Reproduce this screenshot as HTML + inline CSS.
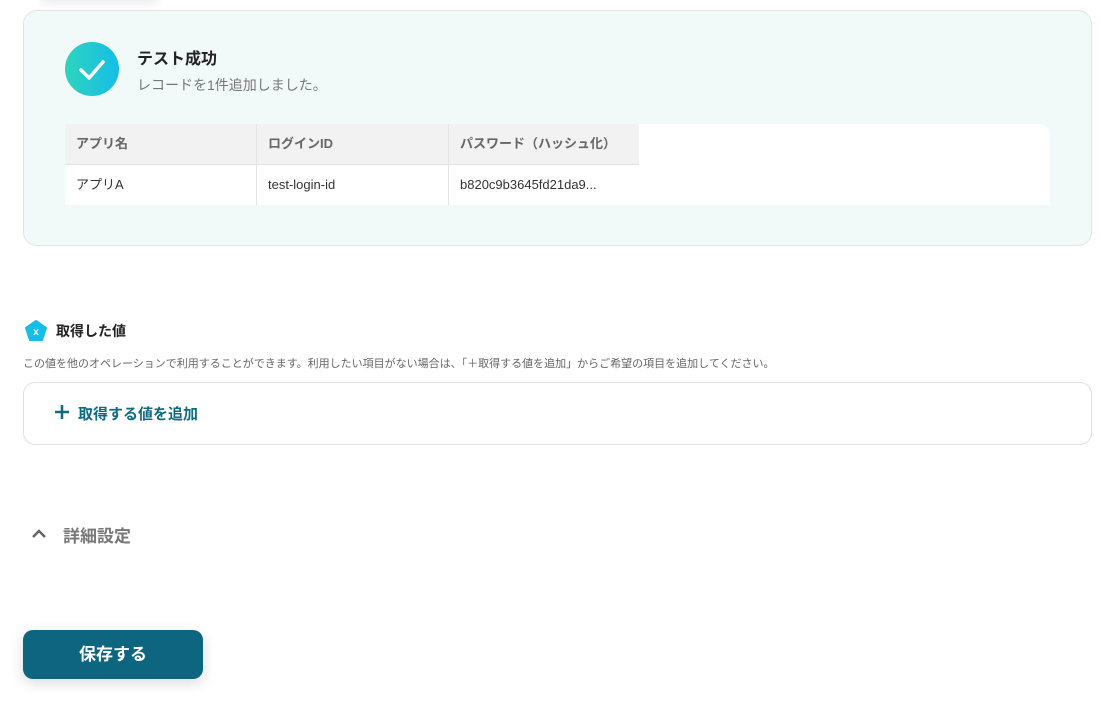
<!DOCTYPE html>
<html><head><meta charset="utf-8"><style>
*{margin:0;padding:0;box-sizing:border-box}
body{width:1115px;height:713px;background:#fff;font-family:"Liberation Sans","Noto Sans CJK JP",sans-serif;position:relative;overflow:hidden;color:#333}
.abs{position:absolute}
.card{left:23px;top:10px;width:1069px;height:236px;background:#f2f9f9;border:1px solid #dde6e6;border-radius:14px}
.tbl{left:65px;top:124px;width:985px;height:81px;background:#fff;border-radius:0 12px 0 0;overflow:hidden}
.cell{position:absolute;font-size:13px;padding-left:11px;line-height:40px;color:#333}
.hd{background:#f2f2f2;color:#666;font-weight:bold;height:41px;border-bottom:1px solid #e3e3e3}
</style></head><body>
<div class="abs" style="left:40px;top:-20px;width:120px;height:20px;box-shadow:0 4px 10px rgba(0,0,0,.08);border-radius:10px"></div>
<div class="abs card"></div>
<div class="abs" style="left:65px;top:42px;width:54px;height:54px;border-radius:50%;background:linear-gradient(90deg,#2dd4bf,#16bde6)">
<svg width="54" height="54"><path d="M16 28 L24 36 L38 20" stroke="#fff" stroke-width="3.5" fill="none" stroke-linecap="round" stroke-linejoin="round"/></svg></div>
<div class="abs" style="left:137px;top:45px;font-size:16px;font-weight:bold;color:#222">テスト成功</div>
<div class="abs" style="left:137px;top:75px;font-size:14px;color:#777">レコードを1件追加しました。</div>
<div class="abs tbl">
<div class="cell hd" style="left:0;top:0;width:191px">アプリ名</div>
<div class="cell hd" style="left:191px;top:0;width:192px;border-left:1px solid #e3e3e3">ログインID</div>
<div class="cell hd" style="left:383px;top:0;width:191px;border-left:1px solid #e3e3e3">パスワード（ハッシュ化）</div>
<div class="cell" style="left:0;top:41px;width:191px">アプリA</div>
<div class="cell" style="left:191px;top:41px;width:192px;height:40px;border-left:1px solid #e3e3e3">test-login-id</div>
<div class="cell" style="left:383px;top:41px;width:191px;height:40px;border-left:1px solid #e3e3e3">b820c9b3645fd21da9...</div>
</div>
<svg class="abs" style="left:25px;top:320px" width="22" height="22"><path d="M11 1 L21 8 L17 20 L5 20 L1 8 Z" fill="#16bde6" stroke="#16bde6" stroke-width="2" stroke-linejoin="round"/><text x="11" y="15" font-size="10" font-weight="bold" fill="#fff" text-anchor="middle" font-family="Liberation Sans">x</text></svg>
<div class="abs" style="left:56px;top:321px;font-size:14px;font-weight:bold;color:#222">取得した値</div>
<div class="abs" style="left:23px;top:355px;font-size:11px;color:#666">この値を他のオペレーションで利用することができます。利用したい項目がない場合は、「＋取得する値を追加」からご希望の項目を追加してください。</div>
<div class="abs" style="left:23px;top:382px;width:1069px;height:63px;border:1px solid #e0e0e0;border-radius:12px"></div>
<svg class="abs" style="left:55px;top:405px" width="14" height="14"><path d="M7 0 V14 M0 7 H14" stroke="#0e6b80" stroke-width="2.5"/></svg>
<div class="abs" style="left:78px;top:403px;font-size:15px;font-weight:bold;color:#0e6b80">取得する値を追加</div>
<svg class="abs" style="left:31px;top:527px" width="16" height="12"><path d="M2 10 L8 4 L14 10" stroke="#666" stroke-width="2.5" fill="none"/></svg>
<div class="abs" style="left:63px;top:522px;font-size:17px;font-weight:bold;color:#777">詳細設定</div>
<div class="abs" style="left:23px;top:630px;width:180px;height:49px;background:#0e6580;border-radius:10px;box-shadow:0 4px 14px rgba(0,0,0,.15);color:#fff;font-size:17px;font-weight:bold;text-align:center;line-height:49px">保存する</div>
</body></html>
